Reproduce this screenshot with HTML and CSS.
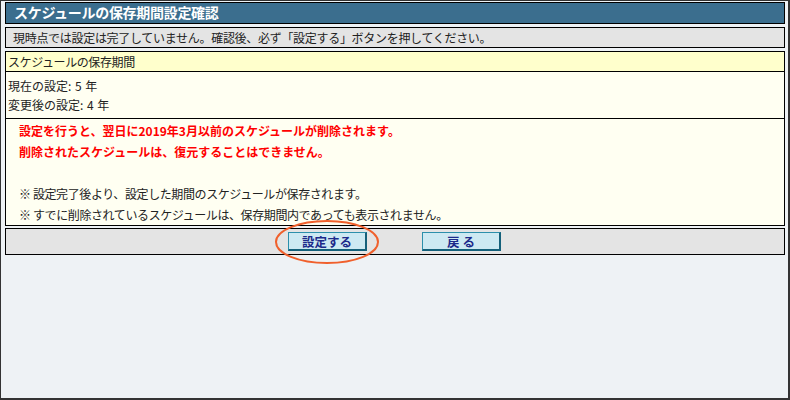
FILE: index.html
```html
<!DOCTYPE html>
<html lang="ja">
<head>
    <meta charset="UTF-8">
    <title>スケジュールの保存期間設定確認</title>
    <link rel="stylesheet" href="styles.css">
</head>
<body>
    <div class="frame">
        <h1 class="title">スケジュールの保存期間設定確認</h1>
        <div class="notice">現時点では設定は完了していません。確認後、必ず「設定する」ボタンを押してください。</div>

        <div class="panel">
            <div class="panel-head">スケジュールの保存期間</div>
            <div class="settings">
                <p>現在の設定: 5 年</p>
                <p>変更後の設定: 4 年</p>
            </div>
            <div class="warning">
                <p class="red">設定を行うと、翌日に2019年3月以前のスケジュールが削除されます。</p>
                <p class="red">削除されたスケジュールは、復元することはできません。</p>
                <p>&nbsp;</p>
                <p>※ 設定完了後より、設定した期間のスケジュールが保存されます。</p>
                <p>※ すでに削除されているスケジュールは、保存期間内であっても表示されません。</p>
            </div>
        </div>

        <div class="button-bar">
            <div class="btn-wrap">
                <button class="btn">設定する</button>
                <svg class="mark" width="106" height="46" viewBox="0 0 106 46">
                    <ellipse cx="53" cy="23" rx="51" ry="21" fill="none" stroke="#f0602c" stroke-width="2"/>
                </svg>
            </div>
            <button class="btn">戻 る</button>
        </div>
    </div>
</body>
</html>
```

FILE: styles.css
```css
* {
    margin: 0;
    padding: 0;
    box-sizing: border-box;
}

body {
    font-family: "Noto Sans CJK JP", "DejaVu Sans", sans-serif;
    font-size: 12px;
    color: #222;
}

.frame {
    width: 790px;
    height: 400px;
    background-color: #eef2f5;
    border: 1px solid #333;
    border-right-width: 2px;
    border-bottom-width: 2px;
    padding: 1px 3px 0 4px;
}

.title {
    height: 22px;
    background-color: #3b6e8e;
    border: 1px solid #000;
    color: #fff;
    font-size: 14px;
    font-weight: bold;
    letter-spacing: -0.3px;
    line-height: 19px;
    padding-left: 8px;
}

.notice {
    margin-top: 3px;
    height: 21px;
    background-color: #e4e4e4;
    border: 1px solid #000;
    line-height: 19px;
    padding-left: 7px;
    letter-spacing: -0.3px;
}

.panel {
    margin-top: 3px;
    border: 1px solid #000;
    background-color: #fffff2;
}

.panel-head {
    height: 20px;
    background-color: #ffffcc;
    border-bottom: 1px solid #000;
    line-height: 19px;
    padding-left: 2px;
    letter-spacing: -0.4px;
}

.settings {
    padding: 4px 2px;
    border-bottom: 1px solid #000;
    line-height: 19px;
    word-spacing: 1px;
}

.warning {
    padding: 1px 0 0 13px;
    line-height: 21px;
    letter-spacing: -0.4px;
}

.warning .red {
    color: #f00;
    font-weight: bold;
    letter-spacing: 0;
}

.button-bar {
    margin-top: 2px;
    height: 27px;
    background-color: #e4e4e4;
    border: 1px solid #000;
    display: flex;
    justify-content: center;
    align-items: center;
    gap: 55px;
    padding-right: 1px;
}

.btn-wrap {
    position: relative;
    display: flex;
}

.btn {
    width: 79px;
    height: 19px;
    background-color: #cde9f2;
    border: 1px solid #2c8fab;
    border-right-color: #14607a;
    border-bottom-color: #14607a;
    border-right-width: 2px;
    border-bottom-width: 2px;
    color: #1c2a8a;
    font-family: "Noto Sans CJK JP", sans-serif;
    font-size: 12.5px;
    font-weight: bold;
    line-height: 15px;
}

.mark {
    position: absolute;
    left: -14px;
    top: -13px;
}
```
